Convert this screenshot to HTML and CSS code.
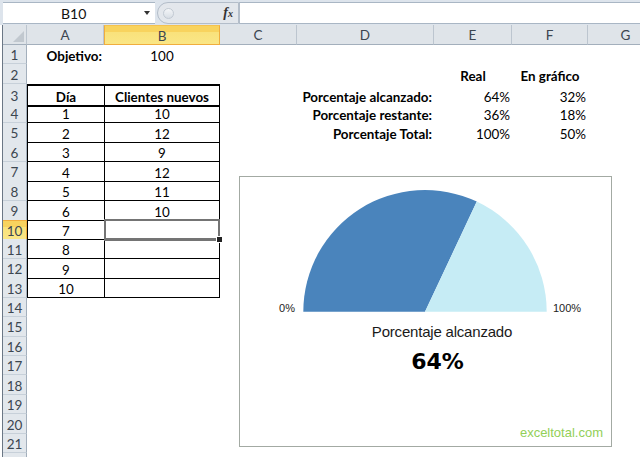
FILE: index.html
```html
<!DOCTYPE html>
<html lang="es">
<head>
<meta charset="utf-8">
<title>Porcentaje alcanzado</title>
<link rel="stylesheet" href="styles.css">
</head>
<body>
<div class="app">
  <div class="fbar">
    <div class="namebox"><span class="nb-text">B10</span><span class="nb-arrow"></span></div>
    <div class="fxzone"><span class="knob"></span><span class="fx">f<span class="fx-x">x</span></span></div>
    <div class="finput"></div>
  </div>
  <div class="sheet">
    <div class="row hdr">
      <div class="corner"><span class="tri"></span></div>
      <div class="ch">A</div><div class="ch sel">B</div><div class="ch">C</div><div class="ch">D</div><div class="ch">E</div><div class="ch">F</div><div class="ch">G</div>
    </div>
    <div class="row"><div class="rh">1</div><div class="c ca right b">Objetivo:</div><div class="c cb mid">100</div></div>
    <div class="row"><div class="rh">2</div><div class="c ce mid b">Real</div><div class="c cf mid b">En gráfico</div></div>
    <div class="row"><div class="rh">3</div><div class="c ca mid b t tA th">Día</div><div class="c cb mid b t tB th">Clientes nuevos</div><div class="c cd right b">Porcentaje alcanzado:</div><div class="c ce right">64%</div><div class="c cf right">32%</div></div>
    <div class="row"><div class="rh">4</div><div class="c ca mid t tA">1</div><div class="c cb mid t tB">10</div><div class="c cd right b">Porcentaje restante:</div><div class="c ce right">36%</div><div class="c cf right">18%</div></div>
    <div class="row"><div class="rh">5</div><div class="c ca mid t tA">2</div><div class="c cb mid t tB">12</div><div class="c cd right b">Porcentaje Total:</div><div class="c ce right">100%</div><div class="c cf right">50%</div></div>
    <div class="row"><div class="rh">6</div><div class="c ca mid t tA">3</div><div class="c cb mid t tB">9</div></div>
    <div class="row"><div class="rh">7</div><div class="c ca mid t tA">4</div><div class="c cb mid t tB">12</div></div>
    <div class="row"><div class="rh">8</div><div class="c ca mid t tA">5</div><div class="c cb mid t tB">11</div></div>
    <div class="row"><div class="rh">9</div><div class="c ca mid t tA">6</div><div class="c cb mid t tB">10</div></div>
    <div class="row"><div class="rh sel">10</div><div class="c ca mid t tA">7</div><div class="c cb mid t tB active"><span class="handle"></span></div></div>
    <div class="row"><div class="rh">11</div><div class="c ca mid t tA">8</div><div class="c cb mid t tB"></div></div>
    <div class="row"><div class="rh">12</div><div class="c ca mid t tA">9</div><div class="c cb mid t tB"></div></div>
    <div class="row"><div class="rh">13</div><div class="c ca mid t tA">10</div><div class="c cb mid t tB"></div></div>
    <div class="row"><div class="rh">14</div></div>
    <div class="row"><div class="rh">15</div></div>
    <div class="row"><div class="rh">16</div></div>
    <div class="row"><div class="rh">17</div></div>
    <div class="row"><div class="rh">18</div></div>
    <div class="row"><div class="rh">19</div></div>
    <div class="row"><div class="rh">20</div></div>
    <div class="row"><div class="rh">21</div></div>
    <div class="row"><div class="rh"></div></div>

    <div class="chart">
      <svg class="gauge" width="371" height="140" viewBox="0 0 371 140">
        <path d="M63.3 134.7 A121.7 121.7 0 0 1 236.8 24.6 L185 134.7 Z" fill="#4a84bc"/>
        <path d="M236.8 24.6 A121.7 121.7 0 0 1 306.7 134.7 L185 134.7 Z" fill="#c6ecf5"/>
        <text x="55" y="135" text-anchor="end" class="axis">0%</text>
        <text x="313" y="135" class="axis">100%</text>
      </svg>
      <div class="ctitle">Porcentaje alcanzado</div>
      <div class="cvalue">64%</div>
      <div class="wm">exceltotal.com</div>
    </div>
  </div>
</div>
</body>
</html>
```
FILE: styles.css
```css
html, body {
  margin: 0;
  padding: 0;
  background: #fff;
}
body {
  width: 640px;
  height: 457px;
  overflow: hidden;
  font-family: Lato, "Liberation Sans", sans-serif;
  font-size: 14px;
  color: #000;
}
.app {
  display: flex;
  flex-direction: column;
  height: 457px;
}

/* formula bar */
.fbar {
  height: 25px;
  box-sizing: border-box;
  padding: 2px 0 1px 3px;
  background: #dde4ec;
  display: flex;
}
.namebox {
  width: 152px;
  background: #fff;
  border-top: 1px solid #a9b6c4;
  border-bottom: 1px solid #a9b6c4;
  display: flex;
  align-items: center;
}
.nb-text {
  padding-left: 58px;
  font-size: 14px;
  color: #111;
}
.nb-arrow {
  margin-left: auto;
  margin-right: 5px;
  width: 0;
  height: 0;
  border-top: 4px solid #333;
  border-left: 3px solid transparent;
  border-right: 3px solid transparent;
}
.fxzone {
  width: 82px;
  margin-left: 2px;
  box-sizing: border-box;
  background: #e3e7ec;
  border: 1px solid #b3bdc9;
  border-radius: 11px 0 0 11px;
  display: flex;
  align-items: center;
}
.knob {
  width: 9px;
  height: 9px;
  margin-left: 5px;
  border-radius: 50%;
  border: 1px solid #c2cad3;
  background: linear-gradient(#f4f6f8, #d8dee5);
}
.fx {
  margin-left: auto;
  margin-right: 5px;
  font-family: "Liberation Serif", serif;
  font-style: italic;
  font-weight: bold;
  font-size: 14px;
  color: #333;
}
.fx-x {
  font-size: 10px;
}
.finput {
  flex: 1;
  background: #fff;
  border-top: 1px solid #a9b6c4;
  border-bottom: 1px solid #a9b6c4;
  border-left: 1px solid #b3bdc9;
}

/* sheet */
.sheet {
  position: relative;
  flex: 1;
  overflow: hidden;
  margin-left: 2px;
  border-left: 1px solid #6b7785;
}
.row {
  display: grid;
  grid-template-columns: 24px 77px 116px 77px 137px 78px 76px 76px;
  height: 19.45px;
}
.row.hdr {
  height: 20px;
}
.corner, .ch {
  box-sizing: border-box;
  background: #dfe4e9;
  border-right: 1px solid #bcc5cf;
  border-bottom: 1px solid #a3afbc;
  display: flex;
  align-items: center;
  justify-content: center;
  color: #3c4650;
  font-size: 13.5px;
  padding-top: 1px;
  position: relative;
}
.ch.sel {
  background: linear-gradient(#f8d35e 0%, #f8d35e 35%, #f9e27c 36%, #fae686 100%);
  border: 1px solid #f0ad3e;
  border-top-color: #f4c24f;
}
.tri {
  position: absolute;
  right: 2px;
  bottom: 2px;
  width: 0;
  height: 0;
  border-bottom: 11px solid #c1c8cf;
  border-left: 11px solid transparent;
}
.rh {
  box-sizing: border-box;
  background: #e2e7ec;
  border-right: 1px solid #a3afbc;
  border-bottom: 1px solid #c7d0d9;
  display: flex;
  align-items: center;
  justify-content: center;
  color: #3c4650;
  font-size: 13.5px;
  padding-top: 2px;
}
.rh.sel {
  background: linear-gradient(#f8d35e 0%, #f8d35e 35%, #f9e27c 36%, #fae686 100%);
  border: 1px solid #f0ad3e;
  border-left: 0;
}
.c {
  box-sizing: border-box;
  display: flex;
  align-items: center;
  padding: 4px 2px 0;
  white-space: nowrap;
  font-size: 13.4px;
  line-height: 15px;
}
.ca { grid-column: 2; }
.cb { grid-column: 3; }
.cd { grid-column: 5; }
.ce { grid-column: 6; }
.cf { grid-column: 7; }
.mid { justify-content: center; }
.right { justify-content: flex-end; }
.b { font-weight: bold; }

.t {
  border-bottom: 1px solid #000;
}
.tA { border-left: 1px solid #000; }
.tB { border-left: 1px solid #000; border-right: 1px solid #000; }
.th {
  border-top: 2px solid #000;
  border-bottom: 2px solid #000;
}
.active {
  position: relative;
}
.active::after {
  content: "";
  position: absolute;
  left: -1px;
  top: -1px;
  right: -1px;
  bottom: -2px;
  border: 2px solid #747474;
  border-bottom-width: 3px;
}
.handle {
  position: absolute;
  right: -4px;
  bottom: -4px;
  width: 5px;
  height: 5px;
  background: #222;
  border: 1px solid #fff;
  z-index: 2;
}

/* chart */
.chart {
  position: absolute;
  left: 236px;
  top: 151px;
  width: 373px;
  height: 271px;
  box-sizing: border-box;
  background: #fff;
  border: 1px solid #a3aaa3;
  display: flex;
  flex-direction: column;
  font-family: "Liberation Sans", Arial, sans-serif;
}
.gauge {
  display: block;
}
.axis {
  font-family: "Liberation Sans", Arial, sans-serif;
  font-size: 11px;
  fill: #222;
}
.ctitle {
  margin-top: 6px;
  padding-left: 33px;
  text-align: center;
  font-size: 15px;
  line-height: 18px;
  color: #1a1a1a;
  letter-spacing: -0.2px;
}
.cvalue {
  margin-top: 8px;
  padding-left: 24px;
  text-align: center;
  font-family: "DejaVu Sans", sans-serif;
  font-weight: bold;
  font-size: 22px;
  line-height: 26px;
  color: #000;
}
.wm {
  margin-top: auto;
  padding-right: 8px;
  padding-bottom: 5px;
  text-align: right;
  font-size: 13px;
  line-height: 16px;
  color: #92cf58;
}
```
